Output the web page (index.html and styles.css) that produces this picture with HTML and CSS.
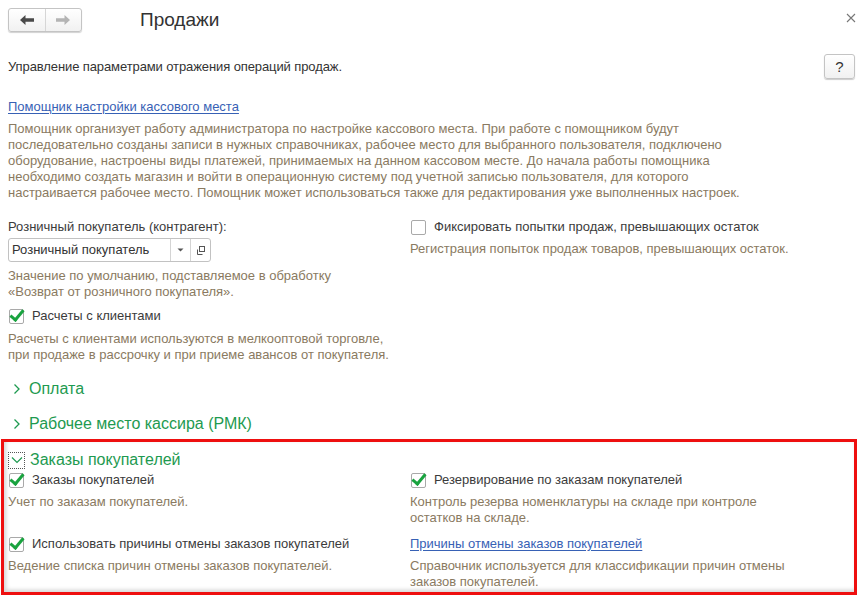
FILE: index.html
```html
<!DOCTYPE html>
<html lang="ru">
<head>
<meta charset="utf-8">
<title>Продажи</title>
<link rel="stylesheet" href="styles.css">
</head>
<body>
<div class="page">
  <header class="header">
    <div class="nav">
      <button class="nav-btn" type="button" aria-label="Назад">
        <svg width="14" height="10" viewBox="0 0 14 10"><path d="M0 5 L5.5 0 V3.2 H14 V6.8 H5.5 V10 Z" fill="#4a4a4a"/></svg>
      </button>
      <button class="nav-btn" type="button" aria-label="Вперед">
        <svg width="14" height="10" viewBox="0 0 14 10"><path d="M14 5 L8.5 0 V3.2 H0 V6.8 H8.5 V10 Z" fill="#b4b4b4"/></svg>
      </button>
    </div>
    <h1 class="title">Продажи</h1>
    <span class="close" aria-label="Закрыть">
      <svg width="10" height="10" viewBox="0 0 10 10"><path d="M1 1 L9 9 M9 1 L1 9" stroke="#777" stroke-width="1.1"/></svg>
    </span>
  </header>

  <div class="intro">
    <span>Управление параметрами отражения операций продаж.</span>
    <button class="help" type="button">?</button>
  </div>

  <a class="link wizard" href="#">Помощник настройки кассового места</a>
  <p class="note wizard-note">Помощник организует работу администратора по настройке кассового места. При работе с помощником будут<br>последовательно созданы записи в нужных справочниках, рабочее место для выбранного пользователя, подключено<br>оборудование, настроены виды платежей, принимаемых на данном кассовом месте. До начала работы помощника<br>необходимо создать магазин и войти в операционную систему под учетной записью пользователя, для которого<br>настраивается рабочее место. Помощник может использоваться также для редактирования уже выполненных настроек.</p>

  <div class="cols top-cols">
    <div class="col">
      <div class="field-label">Розничный покупатель (контрагент):</div>
      <div class="input">
        <span class="input-text">Розничный покупатель</span>
        <span class="input-btn">
          <svg width="7" height="4" viewBox="0 0 7 4"><path d="M0.5 0.5 H6.5 L3.5 3.5 Z" fill="#555"/></svg>
        </span>
        <span class="input-btn">
          <svg width="11" height="11" viewBox="0 0 11 11"><rect x="4.5" y="1.5" width="5" height="5" fill="none" stroke="#555"/><path d="M2.5 4.5 V9.5 H7.5" fill="none" stroke="#555"/></svg>
        </span>
      </div>
      <p class="note hint">Значение по умолчанию, подставляемое в обработку<br>«Возврат от розничного покупателя».</p>
      <label class="check"><span class="box checked"></span>Расчеты с клиентами</label>
      <p class="note desc">Расчеты с клиентами используются в мелкооптовой торговле,<br>при продаже в рассрочку и при приеме авансов от покупателя.</p>
    </div>
    <div class="col">
      <label class="check"><span class="box"></span>Фиксировать попытки продаж, превышающих остаток</label>
      <p class="note desc">Регистрация попыток продаж товаров, превышающих остаток.</p>
    </div>
  </div>

  <div class="group collapsed first-group">
    <svg class="chev" width="8" height="12" viewBox="0 0 8 12"><path d="M1.5 1.5 L6 6 L1.5 10.5" fill="none" stroke="#1e9a50" stroke-width="1.3"/></svg>
    <span>Оплата</span>
  </div>
  <div class="group collapsed">
    <svg class="chev" width="8" height="12" viewBox="0 0 8 12"><path d="M1.5 1.5 L6 6 L1.5 10.5" fill="none" stroke="#1e9a50" stroke-width="1.3"/></svg>
    <span>Рабочее место кассира (РМК)</span>
  </div>

  <section class="orders">
    <div class="group expanded">
      <span class="focus">
        <svg width="12" height="8" viewBox="0 0 12 8"><path d="M1 1.5 L6 6.5 L11 1.5" fill="none" stroke="#1e9a50" stroke-width="1.2"/></svg>
      </span>
      <span>Заказы покупателей</span>
    </div>
    <div class="cols orders-grid">
      <div class="col">
        <label class="check"><span class="box checked"></span>Заказы покупателей</label>
        <p class="note desc">Учет по заказам покупателей.</p>
      </div>
      <div class="col">
        <label class="check"><span class="box checked"></span>Резервирование по заказам покупателей</label>
        <p class="note desc">Контроль резерва номенклатуры на складе при контроле<br>остатков на складе.</p>
      </div>
      <div class="col">
        <label class="check"><span class="box checked"></span>Использовать причины отмены заказов покупателей</label>
        <p class="note desc">Ведение списка причин отмены заказов покупателей.</p>
      </div>
      <div class="col">
        <a class="link" href="#">Причины отмены заказов покупателей</a>
        <p class="note desc">Справочник используется для классификации причин отмены<br>заказов покупателей.</p>
      </div>
    </div>
  </section>
</div>
</body>
</html>
```

FILE: styles.css
```css
* { box-sizing: border-box; }

html, body {
  margin: 0;
  padding: 0;
  background: #fff;
}

body {
  width: 865px;
  height: 599px;
  overflow: hidden;
  font-family: "Liberation Sans", Arial, sans-serif;
  font-size: 13px;
  line-height: 16px;
  color: #3b3b3b;
}

.page {
  padding: 0 8px;
  display: flex;
  flex-direction: column;
  align-items: flex-start;
}

/* header */
.header {
  width: 100%;
  display: flex;
  align-items: center;
  padding-top: 8px;
  height: 31px;
}

.nav {
  display: flex;
  width: 74px;
  height: 24px;
  border: 1px solid #c4c4c4;
  border-radius: 3px;
  background: linear-gradient(#ffffff, #f1f1f1);
  box-shadow: 0 1px 1px rgba(0, 0, 0, 0.18);
  overflow: hidden;
}

.nav-btn {
  flex: 1;
  border: 0;
  padding: 0;
  margin: 0;
  background: transparent;
  display: flex;
  align-items: center;
  justify-content: center;
}

.nav-btn + .nav-btn {
  border-left: 1px solid #d6d6d6;
}

.title {
  margin: 0 0 0 58px;
  font-size: 19px;
  font-weight: normal;
  line-height: 24px;
  color: #333;
}

.close {
  margin-left: auto;
  margin-right: 1px;
  display: flex;
  align-self: flex-start;
  margin-top: 5px;
}

/* intro */
.intro {
  width: 100%;
  display: flex;
  align-items: center;
  justify-content: space-between;
  margin-top: 23px;
  color: #333;
  letter-spacing: -0.1px;
}

.help {
  width: 31px;
  height: 25px;
  margin-right: 2px;
  border: 1px solid #c4c4c4;
  border-radius: 3px;
  background: linear-gradient(#ffffff, #f1f1f1);
  box-shadow: 0 1px 1px rgba(0, 0, 0, 0.2);
  font-family: "Liberation Sans", Arial, sans-serif;
  font-size: 15px;
  color: #333;
  padding: 0;
  letter-spacing: 0;
}

.link {
  color: #3761b5;
  text-decoration: underline;
  text-underline-offset: 2px;
}

.wizard {
  margin-top: 20px;
}

.note {
  margin: 0;
  color: #8a7a61;
}

.wizard-note {
  margin-top: 6px;
}

/* columns */
.cols {
  display: grid;
  grid-template-columns: 402px 1fr;
  width: 100%;
}

.col {
  display: flex;
  flex-direction: column;
  align-items: flex-start;
}

.top-cols {
  margin-top: 18px;
}

.top-cols .col:last-child .desc {
  margin-top: 6px;
}

.field-label {
  color: #3b3b3b;
}

.input {
  margin-top: 3px;
  width: 203px;
  height: 24px;
  border: 1px solid #c2c2c2;
  border-radius: 3px;
  display: flex;
  align-items: stretch;
  background: #fff;
}

.input-text {
  flex: 1;
  padding-left: 3px;
  display: flex;
  align-items: center;
  color: #333;
}

.input-btn {
  width: 20px;
  border-left: 1px solid #d4d4d4;
  display: flex;
  align-items: center;
  justify-content: center;
}

.hint {
  margin-top: 6px;
}

.check {
  display: flex;
  align-items: center;
  gap: 8px;
  color: #3b3b3b;
  margin-top: 8px;
}

.check .box {
  position: relative;
  width: 15px;
  height: 15px;
  margin-left: 1px;
  border: 1px solid #a9a9a9;
  border-radius: 2px;
  background: #fff;
}

.check .box.checked::after {
  content: "";
  position: absolute;
  left: 3px;
  top: -3px;
  width: 5px;
  height: 11px;
  border-right: 3px solid #19a33f;
  border-bottom: 3px solid #19a33f;
  transform: rotate(40deg);
  transform-origin: center;
}

.desc {
  margin-top: 7px;
}

.col > .check:first-child {
  margin-top: 0;
}

/* groups */
.group {
  display: flex;
  align-items: center;
  font-size: 16px;
  line-height: 20px;
  color: #1e9a50;
}

.group.collapsed .chev {
  margin: 0 8px 0 5px;
}

.first-group {
  margin-top: 16px;
}

.group.collapsed + .group.collapsed {
  margin-top: 15px;
}

/* orders section */
.orders {
  margin: 5px 0 0 -7px;
  width: calc(100% + 7px);
  height: 156px;
  border: 3px solid #ee0f0f;
  padding: 8px 0 0 4px;
  box-shadow: inset 2px -2px 4px rgba(0, 0, 0, 0.18);
}

.focus {
  width: 17px;
  height: 17px;
  border: 1px dotted #555;
  display: flex;
  align-items: center;
  justify-content: center;
  margin-right: 5px;
}

.orders-grid {
  margin-top: 2px;
  row-gap: 10px;
}

.orders-grid .desc {
  margin-top: 6px;
}
```
